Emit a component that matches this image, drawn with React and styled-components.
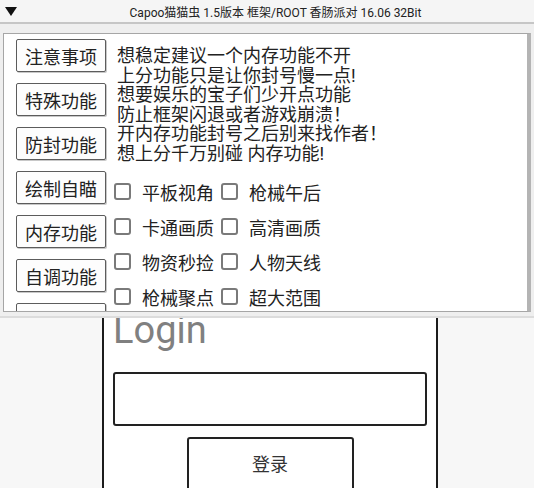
import React from 'react';
import styled, { createGlobalStyle } from 'styled-components';

const GlobalStyle = createGlobalStyle`
  html, body {
    margin: 0;
    padding: 0;
  }
  body {
    width: 534px;
    height: 488px;
    overflow: hidden;
    background: #f7f7f7;
    font-family: Roboto, "Noto Sans CJK SC", sans-serif;
  }
`

const Screen = styled.div`
  position: relative;
  width: 534px;
  height: 488px;
  overflow: hidden;
`

/* login page behind the floating menu */
const LoginCard = styled.div`
  box-sizing: border-box;
  width: 336px;
  height: 560px;
  margin-left: 102px;
  padding: 308px 9px 0;
  display: flex;
  flex-direction: column;
  background: #fff;
  border: 2px solid #1c1c1c;
  border-top: none;
`

const LoginTitle = styled.h1`
  margin: 0 0 20px;
  font-family: Roboto, sans-serif;
  font-weight: 400;
  font-size: 38px;
  line-height: 44px;
  color: #808080;
`

const TextInput = styled.div`
  box-sizing: border-box;
  height: 54px;
  background: #fff;
  border: 2px solid #222;
  border-radius: 3px;
`

const SubmitButton = styled.div`
  box-sizing: border-box;
  align-self: center;
  width: 167px;
  height: 70px;
  margin-top: 11px;
  padding-top: 15px;
  text-align: center;
  font-size: 18px;
  line-height: 22px;
  color: #333;
  background: #fff;
  border: 2px solid #222;
  border-radius: 3px;
`

/* floating menu window */
const FloatWindow = styled.div`
  position: absolute;
  top: 0;
  left: 0;
  box-sizing: border-box;
  width: 534px;
  height: 318px;
  display: flex;
  flex-direction: column;
  background: #efefef;
  border-bottom: 2px solid #dcdcdc;
`

const TitleBar = styled.div`
  height: 22px;
  display: flex;
  align-items: center;
  padding-left: 5px;
  background: #f5f5f5;
  border-bottom: 2px solid #c6c6c6;
  font-size: 12px;
  color: #222;
`

const TitleText = styled.span`
  flex: 1;
  text-align: center;
`

const WindowBody = styled.div`
  flex: 1;
  min-height: 0;
  display: flex;
  padding: 9px 3px 4px 3px;
`

const ScrollBox = styled.div`
  flex: 1;
  display: flex;
  padding: 5px 0 0 12px;
  overflow: hidden;
  background: #fff;
  border: 1px solid #a6a6a6;
  border-right: 4px solid #b4b4b4;
`

const TabColumn = styled.div`
  flex-shrink: 0;
  width: 90px;
  display: flex;
  flex-direction: column;
  gap: 11px;
`

const TabButton = styled.div`
  box-sizing: border-box;
  flex-shrink: 0;
  height: 33px;
  display: flex;
  align-items: center;
  justify-content: center;
  font-size: 18px;
  color: #222;
  background: #fdfdfd;
  border: 1.5px solid #5c5c5c;
  border-radius: 2px;
  box-shadow: 1px 1px 0 #c8c8c8;
`

const Content = styled.div`
  margin-left: 8px;
  display: flex;
  flex-direction: column;
`

const Notice = styled.div`
  margin-top: 7px;
  padding-left: 3px;
  font-size: 18px;
  line-height: 19.5px;
  color: #222;
  white-space: pre;
`

const OptionGrid = styled.div`
  margin-top: 11px;
  display: flex;
  flex-direction: column;
`

const OptionRow = styled.div`
  height: 35px;
  display: flex;
  align-items: center;
  gap: 7px;
`

const Option = styled.label`
  display: flex;
  align-items: center;
  gap: 11px;
  font-size: 18px;
  color: #222;
`

const CheckBox = styled.span`
  box-sizing: border-box;
  width: 17px;
  height: 17px;
  background: #fff;
  border: 2px solid #7a7a7a;
  border-radius: 3px;
`

const tabs = ['注意事项', '特殊功能', '防封功能', '绘制自瞄', '内存功能', '自调功能', '其他功能']

const notice = [
  '想稳定建议一个内存功能不开',
  '上分功能只是让你封号慢一点!',
  '想要娱乐的宝子们少开点功能',
  '防止框架闪退或者游戏崩溃！',
  '开内存功能封号之后别来找作者！',
  '想上分千万别碰 内存功能!',
]

const options = [
  ['平板视角', '枪械午后'],
  ['卡通画质', '高清画质'],
  ['物资秒捡', '人物天线'],
  ['枪械聚点', '超大范围'],
]

const App = () => {
  return (
    <Screen>
      <GlobalStyle />
      <LoginCard>
        <LoginTitle>Login</LoginTitle>
        <TextInput />
        <SubmitButton>登录</SubmitButton>
      </LoginCard>

      <FloatWindow>
        <TitleBar>
          <svg width="12" height="9" viewBox="0 0 12 9">
            <polygon points="0,0 12,0 6,9" fill="#111" />
          </svg>
          <TitleText>Capoo猫猫虫 1.5版本 框架/ROOT 香肠派对 16.06 32Bit</TitleText>
        </TitleBar>
        <WindowBody>
          <ScrollBox>
            <TabColumn>
              {tabs.map(t => <TabButton key={t}>{t}</TabButton>)}
            </TabColumn>
            <Content>
              <Notice>{notice.join('\n')}</Notice>
              <OptionGrid>
                {options.map((row, i) => (
                  <OptionRow key={i}>
                    {row.map(o => (
                      <Option key={o}>
                        <CheckBox />
                        {o}
                      </Option>
                    ))}
                  </OptionRow>
                ))}
              </OptionGrid>
            </Content>
          </ScrollBox>
        </WindowBody>
      </FloatWindow>
    </Screen>
  )
}

export default App
